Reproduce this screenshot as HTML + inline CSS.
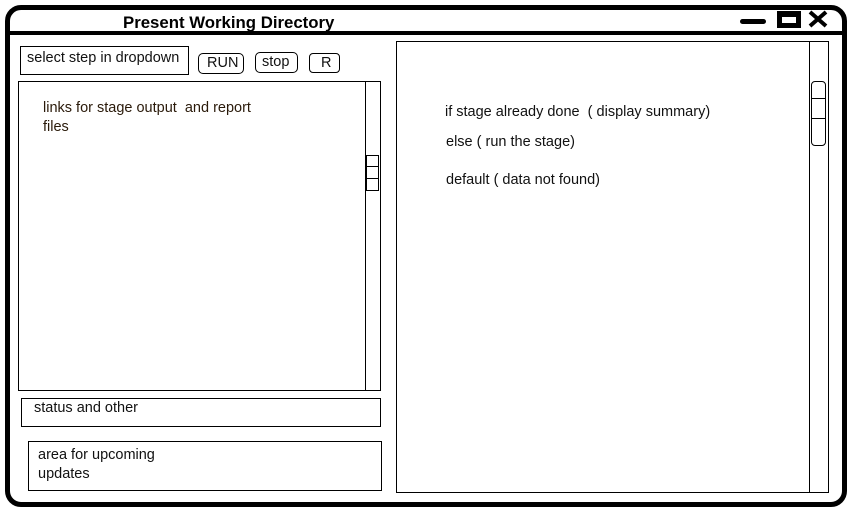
<!DOCTYPE html>
<html><head><style>
body{margin:0;width:854px;height:513px;background:#fff;position:relative;overflow:hidden;font-family:"Liberation Sans",sans-serif;font-size:14.5px;color:#111}
.a{position:absolute;box-sizing:border-box}
.t{position:absolute;white-space:nowrap}
</style></head><body>
<div class="a" style="left:5px;top:5px;width:842px;height:502px;border:5px solid #000;border-radius:16px"></div>
<div class="a" style="left:8px;top:31px;width:836px;height:4px;background:#000"></div>
<div class="t" style="left:123px;top:13px;font-weight:bold;font-size:16.8px;color:#000">Present Working Directory</div>
<div class="a" style="left:740px;top:19px;width:26px;height:5px;background:#000;border-radius:3px"></div>
<div class="a" style="left:777px;top:11px;width:24px;height:17px;border:5px solid #000;border-top-width:6px"></div>
<svg class="a" style="left:806px;top:9px" width="24" height="20"><path d="M4 3L20 17M20 3L4 17" stroke="#000" stroke-width="4"/></svg>

<div class="a" style="left:20px;top:46px;width:169px;height:29px;border:1px solid #000"></div>
<div class="t" style="left:27px;top:50px">select step in dropdown</div>
<div class="a" style="left:198px;top:53px;width:46px;height:21px;border:1px solid #000;border-radius:5px"></div>
<div class="t" style="left:207px;top:55px">RUN</div>
<div class="a" style="left:255px;top:52px;width:43px;height:21px;border:1px solid #000;border-radius:5px"></div>
<div class="t" style="left:262px;top:54px">stop</div>
<div class="a" style="left:309px;top:53px;width:31px;height:20px;border:1px solid #000;border-radius:4px"></div>
<div class="t" style="left:321px;top:55px">R</div>

<div class="a" style="left:18px;top:81px;width:363px;height:310px;border:1px solid #000"></div>
<div class="a" style="left:365px;top:81px;width:1px;height:310px;background:#000"></div>
<div class="a" style="left:366px;top:155px;width:13px;height:36px;border:1px solid #000"></div>
<div class="a" style="left:366px;top:166px;width:13px;height:1px;background:#000"></div>
<div class="a" style="left:366px;top:178px;width:13px;height:1px;background:#000"></div>
<div class="t" style="left:43px;top:100px;color:#2a1a0a">links for stage output&nbsp; and report</div>
<div class="t" style="left:43px;top:119px;color:#2a1a0a">files</div>

<div class="a" style="left:21px;top:398px;width:360px;height:29px;border:1px solid #000"></div>
<div class="t" style="left:34px;top:400px">status and other</div>
<div class="a" style="left:28px;top:441px;width:354px;height:50px;border:1px solid #000"></div>
<div class="t" style="left:38px;top:447px">area for upcoming</div>
<div class="t" style="left:38px;top:466px">updates</div>

<div class="a" style="left:396px;top:41px;width:433px;height:452px;border:1px solid #000"></div>
<div class="a" style="left:809px;top:41px;width:1px;height:452px;background:#000"></div>
<div class="a" style="left:811px;top:81px;width:15px;height:65px;border:1px solid #000;border-radius:4px"></div>
<div class="a" style="left:811px;top:98px;width:15px;height:1px;background:#000"></div>
<div class="a" style="left:811px;top:118px;width:15px;height:1px;background:#000"></div>
<div class="t" style="left:445px;top:104px">if stage already done&nbsp; ( display summary)</div>
<div class="t" style="left:446px;top:134px">else ( run the stage)</div>
<div class="t" style="left:446px;top:172px">default ( data not found)</div>
</body></html>
